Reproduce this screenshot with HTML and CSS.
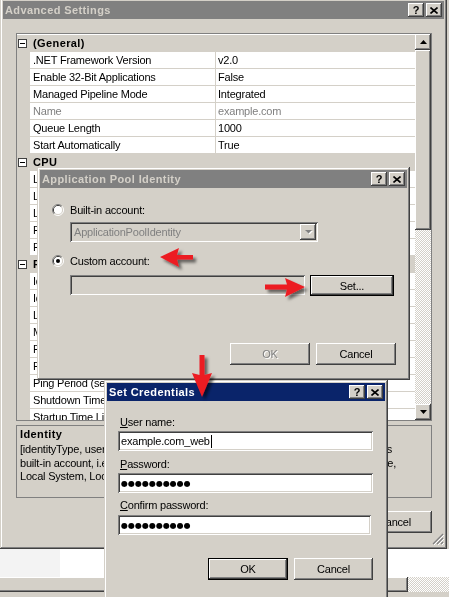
FILE: index.html
```html
<!DOCTYPE html>
<html>
<head>
<meta charset="utf-8">
<link rel="stylesheet" href="styles.css">
</head>
<body>
<div class="desktop">
  <div class="under-app">
    <div class="ua-band"><div class="ua-left"></div></div>
    <div class="ua-hscroll"><div class="ua-thumb"></div><div class="ua-track"></div></div>
  </div>

  <div class="win main-win">
    <div class="titlebar inactive">
      <span class="title">Advanced Settings</span>
      <div class="cap-btns">
        <span class="cap-btn">?</span>
        <span class="cap-btn"><svg width="8" height="7" viewBox="0 0 8 7"><path d="M0.5 0.5 L7.5 6.5 M7.5 0.5 L0.5 6.5" stroke="#000" stroke-width="1.6"/></svg></span>
      </div>
    </div>
    <div class="main-body">
      <div class="grid">
        <div class="rows">
          <div class="cat"><span class="minus"></span><span>(General)</span></div>
          <div class="row"><span class="gut"></span><span class="k">.NET Framework Version</span><span class="v">v2.0</span></div>
          <div class="row"><span class="gut"></span><span class="k">Enable 32-Bit Applications</span><span class="v">False</span></div>
          <div class="row"><span class="gut"></span><span class="k">Managed Pipeline Mode</span><span class="v">Integrated</span></div>
          <div class="row ro"><span class="gut"></span><span class="k">Name</span><span class="v">example.com</span></div>
          <div class="row"><span class="gut"></span><span class="k">Queue Length</span><span class="v">1000</span></div>
          <div class="row"><span class="gut"></span><span class="k">Start Automatically</span><span class="v">True</span></div>
          <div class="cat"><span class="minus"></span><span>CPU</span></div>
          <div class="row"><span class="gut"></span><span class="k">Limit</span><span class="v">0</span></div>
          <div class="row"><span class="gut"></span><span class="k">Limit Action</span><span class="v">NoAction</span></div>
          <div class="row"><span class="gut"></span><span class="k">Limit Interval (minutes)</span><span class="v">5</span></div>
          <div class="row"><span class="gut"></span><span class="k">Processor Affinity Enabled</span><span class="v">False</span></div>
          <div class="row"><span class="gut"></span><span class="k">Processor Affinity Mask</span><span class="v">4294967295</span></div>
          <div class="cat"><span class="minus"></span><span>Process Model</span></div>
          <div class="row"><span class="gut"></span><span class="k">Identity</span><span class="v">ApplicationPoolIdentity</span></div>
          <div class="row"><span class="gut"></span><span class="k">Idle Time-out (minutes)</span><span class="v">20</span></div>
          <div class="row"><span class="gut"></span><span class="k">Load User Profile</span><span class="v">False</span></div>
          <div class="row"><span class="gut"></span><span class="k">Maximum Worker Processes</span><span class="v">1</span></div>
          <div class="row"><span class="gut"></span><span class="k">Ping Enabled</span><span class="v">True</span></div>
          <div class="row"><span class="gut"></span><span class="k">Ping Maximum Response Time (seconds)</span><span class="v">90</span></div>
          <div class="row"><span class="gut"></span><span class="k">Ping Period (seconds)</span><span class="v">30</span></div>
          <div class="row"><span class="gut"></span><span class="k">Shutdown Time Limit (seconds)</span><span class="v">90</span></div>
          <div class="row"><span class="gut"></span><span class="k">Startup Time Limit (seconds)</span><span class="v">90</span></div>
        </div>
        <div class="vscroll">
          <div class="sb-btn raised"><svg width="7" height="4" viewBox="0 0 7 4"><path d="M3.5 0 L7 4 L0 4 Z" fill="#000"/></svg></div>
          <div class="sb-thumb raised"></div>
          <div class="sb-track"></div>
          <div class="sb-btn raised"><svg width="7" height="4" viewBox="0 0 7 4"><path d="M0 0 L7 0 L3.5 4 Z" fill="#000"/></svg></div>
        </div>
      </div>
      <div class="desc">
        <div class="desc-title">Identity</div>
        <div class="desc-line w1"><span class="dl-left">[identityType, username, password] Configures the application pool to run</span><span class="dl-right">as</span></div>
        <div class="desc-line w2"><span class="dl-left">built-in account, i.e. Application Pool Identity (recommended), Network</span><span class="dl-right">Service,</span></div>
        <div class="desc-line w1"><span class="dl-left">Local System, Local Service, or as a specific user identity.</span></div>
      </div>
      <div class="main-actions">
        <button class="btn raised">OK</button>
        <button class="btn raised">Cancel</button>
      </div>
    </div>
    <svg class="grip" width="12" height="12" viewBox="0 0 12 12">
      <path d="M11 1 L1 11 M11 5 L5 11 M11 9 L9 11" stroke="#808080" stroke-width="1.2"/>
      <path d="M12 2 L2 12 M12 6 L6 12 M12 10 L10 12" stroke="#fff" stroke-width="1"/>
    </svg>
  </div>

  <div class="win dlg-identity">
    <div class="titlebar inactive">
      <span class="title">Application Pool Identity</span>
      <div class="cap-btns">
        <span class="cap-btn">?</span>
        <span class="cap-btn"><svg width="8" height="7" viewBox="0 0 8 7"><path d="M0.5 0.5 L7.5 6.5 M7.5 0.5 L0.5 6.5" stroke="#000" stroke-width="1.6"/></svg></span>
      </div>
    </div>
    <div class="id-body">
      <div class="radio-row">
        <svg class="radio" width="12" height="12" viewBox="0 0 12 12">
          <path d="M2.11 9.89 A5.5 5.5 0 0 1 9.89 2.11" stroke="#808080" fill="none"/>
          <path d="M9.89 2.11 A5.5 5.5 0 0 1 2.11 9.89" stroke="#fff" fill="none"/>
          <path d="M2.82 9.18 A4.5 4.5 0 0 1 9.18 2.82" stroke="#404040" fill="none"/>
          <path d="M9.18 2.82 A4.5 4.5 0 0 1 2.82 9.18" stroke="#d4d0c8" fill="none"/>
          <circle cx="6" cy="6" r="4" fill="#fff"/>
        </svg>
        <span>Built-in account:</span>
      </div>
      <div class="combo sunken">
        <span class="combo-text">ApplicationPoolIdentity</span>
        <span class="combo-btn raised"><svg width="9" height="6" viewBox="0 0 9 6"><path d="M1 1 L8 1 L4.5 4.5 Z" fill="#fff" transform="translate(1 1)"/><path d="M1 1 L8 1 L4.5 4.5 Z" fill="#808080"/></svg></span>
      </div>
      <div class="radio-row r2">
        <svg class="radio" width="12" height="12" viewBox="0 0 12 12">
          <path d="M2.11 9.89 A5.5 5.5 0 0 1 9.89 2.11" stroke="#808080" fill="none"/>
          <path d="M9.89 2.11 A5.5 5.5 0 0 1 2.11 9.89" stroke="#fff" fill="none"/>
          <path d="M2.82 9.18 A4.5 4.5 0 0 1 9.18 2.82" stroke="#404040" fill="none"/>
          <path d="M9.18 2.82 A4.5 4.5 0 0 1 2.82 9.18" stroke="#d4d0c8" fill="none"/>
          <circle cx="6" cy="6" r="4" fill="#fff"/>
          <circle cx="6" cy="6" r="2" fill="#000"/>
        </svg>
        <span>Custom account:</span>
      </div>
      <div class="field-row">
        <div class="field disabled sunken"></div>
        <button class="btn raised default set-btn">Set...</button>
      </div>
      <div class="dlg-actions">
        <button class="btn raised wide dis">OK</button>
        <button class="btn raised wide">Cancel</button>
      </div>
    </div>
  </div>

  <div class="win dlg-cred">
    <div class="titlebar active">
      <span class="title">Set Credentials</span>
      <div class="cap-btns">
        <span class="cap-btn">?</span>
        <span class="cap-btn"><svg width="8" height="7" viewBox="0 0 8 7"><path d="M0.5 0.5 L7.5 6.5 M7.5 0.5 L0.5 6.5" stroke="#000" stroke-width="1.6"/></svg></span>
      </div>
    </div>
    <div class="cred-body">
      <div class="lbl"><u>U</u>ser name:</div>
      <div class="field white sunken f1"><span>example.com_web</span><span class="caret"></span></div>
      <div class="lbl l2"><u>P</u>assword:</div>
      <div class="field white sunken f2"><span class="dots">●●●●●●●●●●</span></div>
      <div class="lbl l3"><u>C</u>onfirm password:</div>
      <div class="field white sunken f3"><span class="dots">●●●●●●●●●●</span></div>
      <div class="cred-actions">
        <button class="btn raised wide default">OK</button>
        <button class="btn raised cancel2">Cancel</button>
      </div>
    </div>
  </div>

  <svg class="arrows" width="449" height="597" viewBox="0 0 449 597">
    <defs>
      <filter id="sh" x="-50%" y="-50%" width="200%" height="200%">
        <feDropShadow dx="3" dy="3" stdDeviation="1.6" flood-color="#000" flood-opacity="0.55"/>
      </filter>
    </defs>
    <g fill="#ec1c24" filter="url(#sh)">
      <path d="M160 257 L179 248 L177 255 L193 255 L193 259.5 L177 259.5 L179 267 Z"/>
      <path d="M305 287 L285 278 L287 284.5 L265 284.5 L265 289.5 L287 289.5 L285 297 Z"/>
      <path d="M202 397 L192 373 L199.5 375 L199.5 355 L204.5 355 L204.5 375 L212 373 Z"/>
    </g>
  </svg>
</div>
</body>
</html>
```
FILE: styles.css
```css
* { box-sizing: border-box; }
html, body { margin: 0; padding: 0; }
body {
  width: 449px; height: 597px; overflow: hidden;
  background: #d4d0c8;
  font-family: "Liberation Sans", Arial, sans-serif;
  font-size: 11px; letter-spacing: -0.2px; color: #000;
}
.desktop { position: relative; width: 449px; height: 597px; overflow: hidden; background: #d4d0c8; opacity: 0.999; }

.raised {
  background: #d4d0c8;
  box-shadow: inset -1px -1px #404040, inset 1px 1px #fff, inset -2px -2px #808080, inset 2px 2px #d4d0c8;
}
.sunken {
  box-shadow: inset 1px 1px #808080, inset -1px -1px #fff, inset 2px 2px #404040, inset -2px -2px #d4d0c8;
}

/* background application below */
.under-app { position: absolute; left: 0; top: 549px; width: 449px; height: 48px; background: #d4d0c8; }
.ua-band { height: 28px; background: #fff; }
.ua-left { width: 60px; height: 28px; background: #f3f3f3; }
.ua-hscroll { height: 15px; display: flex; }
.ua-thumb { width: 408px; background: #d4d0c8; box-shadow: inset -1px -1px #404040, inset 0 1px #fff, inset -2px -2px #808080; }
.ua-track { flex: 1; background-image: repeating-conic-gradient(#fff 0 25%, #d4d0c8 0 50%); background-size: 2px 2px; }

/* windows */
.win {
  position: absolute; background: #d4d0c8; padding: 3px;
  display: flex; flex-direction: column;
  box-shadow: inset -1px -1px #404040, inset 1px 1px #d4d0c8, inset -2px -2px #808080, inset 2px 2px #fff;
}
.main-win { left: 0; top: -2px; width: 447px; height: 551px; }
.dlg-identity { left: 37px; top: 167px; width: 373px; height: 213px; }
.dlg-cred { left: 104px; top: 380px; width: 284px; height: 222px; }

.titlebar { height: 18px; flex: none; display: flex; align-items: center; padding: 0 2px 0 2px; }
.titlebar.inactive { background: #808080; color: #d4d0c8; }
.titlebar.active { background: #0a246a; color: #fff; }
.title { flex: 1; font-weight: bold; letter-spacing: 0.4px; white-space: nowrap; }
.cap-btns { display: flex; gap: 2px; }
.cap-btn {
  width: 16px; height: 14px; display: flex; align-items: center; justify-content: center;
  background: #d4d0c8; color: #000; font-weight: bold; font-size: 11px; letter-spacing: 0;
  box-shadow: inset -1px -1px #404040, inset 1px 1px #fff, inset -2px -2px #808080;
}

/* main window body */
.main-body { flex: 1; display: flex; flex-direction: column; padding: 14px 12px 0 13px; }
.grid { flex: none; height: 388px; border: 1px solid #808080; display: flex; background: #fff; }
.rows { flex: 1; display: flex; flex-direction: column; overflow: hidden; padding-top: 1px; }
.row, .cat { flex: none; height: 17px; display: flex; border-bottom: 1px solid #d4d0c8; line-height: 16px; white-space: nowrap; }
.cat { background: #d4d0c8; font-weight: bold; letter-spacing: 0.4px; align-items: center; }
.minus {
  width: 9px; height: 9px; margin: 0 6px 0 1px; border: 1px solid #404040; background: #fff;
  display: flex; align-items: center; justify-content: center;
}
.minus::after { content: ""; width: 5px; height: 1px; background: #000; }
.gut { width: 13px; flex: none; background: #d4d0c8; }
.k { width: 186px; flex: none; padding-left: 3px; border-right: 1px solid #d4d0c8; overflow: hidden; }
.v { flex: 1; padding-left: 2px; overflow: hidden; }
.row.ro { color: #808080; }

.vscroll { width: 16px; flex: none; display: flex; flex-direction: column; }
.sb-btn { height: 16px; flex: none; display: flex; align-items: center; justify-content: center; }
.sb-thumb { height: 180px; flex: none; }
.sb-track { flex: 1; background-image: repeating-conic-gradient(#fff 0 25%, #d4d0c8 0 50%); background-size: 2px 2px; }

.desc { flex: none; margin-top: 4px; height: 73px; border: 1px solid #808080; padding: 2px 3px; overflow: hidden; }
.desc-title { font-weight: bold; letter-spacing: 0.4px; line-height: 13px; margin-bottom: 2px; }
.desc-line { display: flex; justify-content: space-between; line-height: 13.5px; white-space: nowrap; }
.desc-line.w1 { width: 372px; }
.desc-line.w2 { width: 376px; }
.dl-left { overflow: hidden; min-width: 0; }
.dl-right { flex: none; }

.main-actions { display: flex; justify-content: flex-end; gap: 6px; margin-top: 13px; }
.btn {
  width: 75px; height: 22px; border: 0; margin: 0; padding: 0;
  display: flex; align-items: center; justify-content: center;
  font-family: inherit; font-size: 11px; letter-spacing: -0.2px; color: #000;
}
.btn.wide { width: 80px; }
.btn.default { border: 1px solid #000; }
.btn.dis { color: #808080; text-shadow: 1px 1px #fff; }
.grip { position: absolute; right: 3px; bottom: 4px; }

/* identity dialog */
.id-body { flex: 1; display: flex; flex-direction: column; padding: 15px 11px 0 12px; }
.radio-row { height: 13px; display: flex; align-items: center; gap: 6px; }
.radio-row.r2 { margin-top: 12px; }
.radio { flex: none; }
.combo {
  margin: 6px 0 0 18px; width: 248px; height: 20px; background: #d4d0c8;
  display: flex; align-items: center; padding: 2px;
}
.combo-text { flex: 1; color: #808080; padding-left: 2px; }
.combo-btn { width: 16px; height: 16px; display: flex; align-items: center; justify-content: center; }
.field-row { margin: 8px 0 0 18px; display: flex; gap: 5px; align-items: flex-start; }
.field { width: 235px; height: 20px; display: flex; align-items: center; padding-left: 3px; }
.field.disabled { background: #d4d0c8; }
.set-btn { width: 84px; height: 21px; }
.dlg-actions { margin-top: 47px; display: flex; justify-content: flex-end; gap: 6px; }

/* credentials dialog */
.cred-body { flex: 1; display: flex; flex-direction: column; padding: 15px 12px 0 11px; }
.lbl { line-height: 13px; margin-left: 2px; }
.lbl.l2 { margin-top: 7px; }
.lbl.l3 { margin-top: 6px; }
.field.white { background: #fff; width: 255px; }
.f1, .f2 { margin-top: 2px; }
.f3 { margin-top: 3px; width: 253px !important; }
.caret { width: 1px; height: 13px; background: #000; margin-left: 1px; }
.dots { font-family: "DejaVu Sans", sans-serif; font-size: 8px; letter-spacing: 0; }
.cred-actions { margin-top: 23px; display: flex; justify-content: flex-end; gap: 6px; }
.cancel2 { width: 79px; }

.arrows { position: absolute; left: 0; top: 0; pointer-events: none; }
```
